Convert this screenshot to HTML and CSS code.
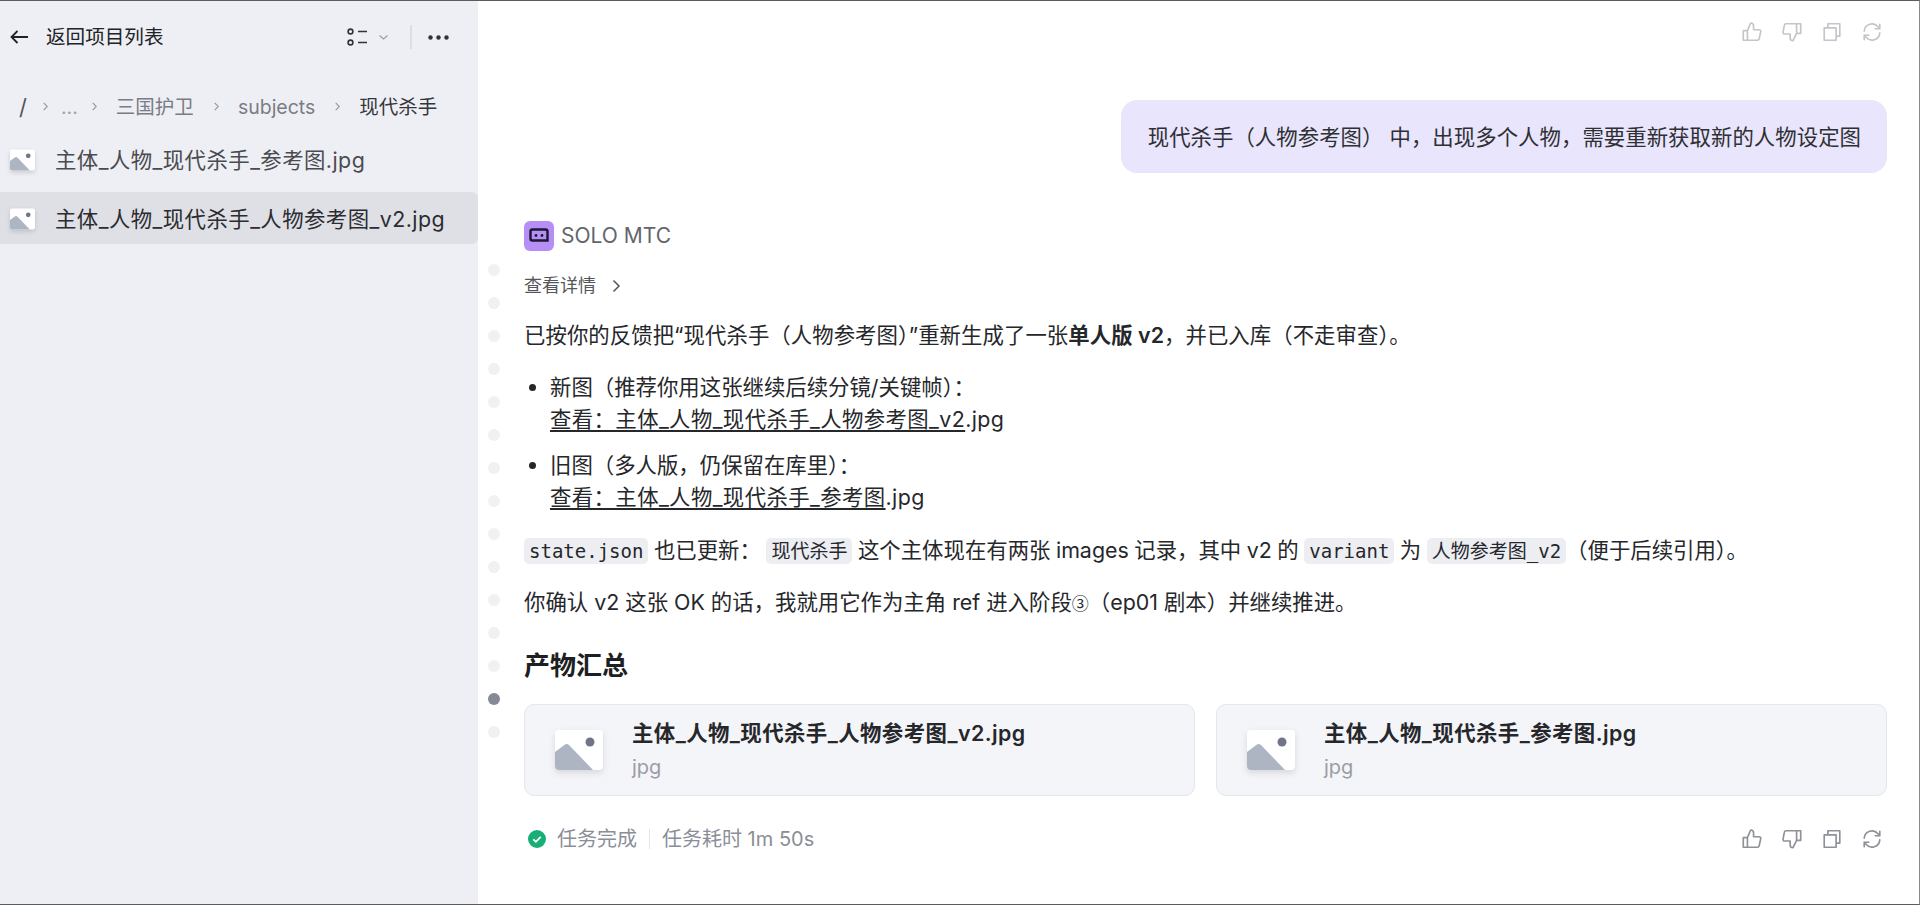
FILE: index.html
```html
<!DOCTYPE html>
<html lang="zh-CN">
<head>
  <meta charset="utf-8">
  <meta name="viewport" content="width=device-width, initial-scale=1.0">
  <title>SOLO MTC</title>
  <link rel="stylesheet" href="styles.css">
</head>
<body>
  <svg class="defs" width="0" height="0">
    <symbol id="pic" viewBox="0 0 48 40">
      <rect width="48" height="40" rx="4" fill="#fff"/>
      <path d="M0 22 L10 14.500 Q12 13.500 14 15 L38 40 H4 Q0 40 0 36 Z" fill="#adb4c2"/>
      <circle cx="35" cy="12" r="4.500" fill="#6f768a"/>
    </symbol>
    <symbol id="up" viewBox="0 0 24 24">
      <path d="M2.500 10.500h4.500v10.500H2.500z M7 10.500l3.600-8.300c1.900 0 3.100 1.200 3.100 3v4.300h6a1.800 1.800 0 0 1 1.800 2.200l-1.700 7.800a1.800 1.800 0 0 1-1.800 1.500H7" fill="none" stroke="currentColor" stroke-width="1.800" stroke-linejoin="round"/>
    </symbol>
    <symbol id="down" viewBox="0 0 24 24">
      <path d="M21.500 3H17v10.500h4.500z M17 3H5.500a1.800 1.800 0 0 0-1.800 1.500L2.200 12a1.800 1.800 0 0 0 1.800 2.200h6v4.300c0 1.800 1.200 3 3.100 3l3.900-8" fill="none" stroke="currentColor" stroke-width="1.800" stroke-linejoin="round"/>
    </symbol>
    <symbol id="copy" viewBox="0 0 24 24">
      <path d="M3.500 7.500h13v13.500h-13z M7.500 7.500V3h13v13.500h-4" fill="none" stroke="currentColor" stroke-width="1.800" stroke-linejoin="round"/>
    </symbol>
    <symbol id="redo" viewBox="0 0 24 24">
      <path d="M3.500 11a8.500 8.500 0 0 1 15-4.800L20.500 8.500 M20.500 3.500v5h-5 M20.500 13a8.500 8.500 0 0 1-15 4.800L3.500 15.500 M3.500 20.500v-5h5" fill="none" stroke="currentColor" stroke-width="1.800" stroke-linejoin="round" stroke-linecap="round"/>
    </symbol>
    <symbol id="crumb-arrow" viewBox="0 0 5 9">
      <path d="M.7.800L4.300 4.500.7 8.200" fill="none" stroke="#93959d" stroke-width="1.100"/>
    </symbol>
  </svg>

  <div class="window">
    <aside class="sidebar">
      <div class="side-head">
        <svg class="back" width="18" height="14" viewBox="0 0 18 14"><path d="M18 7H1.500 M7.500 1L1.500 7l6 6" fill="none" stroke="#222" stroke-width="1.800"/></svg>
        <span class="side-title">返回项目列表</span>
        <div class="side-tools">
          <svg width="20" height="18" viewBox="0 0 20 18"><circle cx="3.500" cy="3.500" r="2.400" fill="none" stroke="#333" stroke-width="1.600"/><circle cx="3.500" cy="14.500" r="2.400" fill="none" stroke="#333" stroke-width="1.600"/><path d="M11 3.500h9 M11 14.500h9" stroke="#333" stroke-width="1.600"/></svg>
          <svg class="chev" width="9" height="5" viewBox="0 0 9 5"><path d="M.5.500l4 3.500 4-3.500" fill="none" stroke="#9a9da6" stroke-width="1.200"/></svg>
          <span class="tool-sep"></span>
          <svg width="21" height="5" viewBox="0 0 21 5"><circle cx="2.500" cy="2.500" r="2.200" fill="#333"/><circle cx="10.500" cy="2.500" r="2.200" fill="#333"/><circle cx="18.500" cy="2.500" r="2.200" fill="#333"/></svg>
        </div>
      </div>

      <nav class="crumbs">
        <span class="crumb-root">/</span>
        <svg class="crumb-sep"><use href="#crumb-arrow"/></svg>
        <span class="crumb-dots">...</span>
        <svg class="crumb-sep"><use href="#crumb-arrow"/></svg>
        <span>三国护卫</span>
        <svg class="crumb-sep"><use href="#crumb-arrow"/></svg>
        <span>subjects</span>
        <svg class="crumb-sep"><use href="#crumb-arrow"/></svg>
        <span class="crumb-now">现代杀手</span>
      </nav>

      <div class="file">
        <svg class="file-icon"><use href="#pic"/></svg>
        <span>主体_人物_现代杀手_参考图.jpg</span>
      </div>
      <div class="file selected">
        <svg class="file-icon"><use href="#pic"/></svg>
        <span>主体_人物_现代杀手_人物参考图_v2.jpg</span>
      </div>
    </aside>

    <main class="main">
      <div class="rail">
        <i></i><i></i><i></i><i></i><i></i><i></i><i></i><i></i><i></i><i></i><i></i><i></i><i></i><i class="on"></i><i></i>
      </div>

      <div class="chat">
        <div class="actions faint">
          <svg><use href="#up"/></svg>
          <svg><use href="#down"/></svg>
          <svg><use href="#copy"/></svg>
          <svg><use href="#redo"/></svg>
        </div>

        <div class="bubble">现代杀手（人物参考图） 中，出现多个人物，需要重新获取新的人物设定图</div>

        <div class="agent">
          <svg class="logo" width="30" height="30" viewBox="0 0 30 30">
            <rect width="30" height="30" rx="6" fill="#b78ef6"/>
            <path d="M6.500 10.500a2 2 0 0 1 2-2h13a2 2 0 0 1 2 2v9H8.500a2 2 0 0 1-2-2z" fill="#b78ef6" stroke="#1c1830" stroke-width="2.400"/>
            <circle cx="12" cy="14.500" r="1.400" fill="#1c1830"/>
            <circle cx="18" cy="14.500" r="1.400" fill="#1c1830"/>
          </svg>
          <span>SOLO MTC</span>
        </div>

        <div class="details">
          <span>查看详情</span>
          <svg width="9" height="14" viewBox="0 0 9 14"><path d="M1.500 1.500L7 7l-5.500 5.500" fill="none" stroke="#555" stroke-width="1.500"/></svg>
        </div>

        <p class="p-first">已按你的反馈把“现代杀手（人物参考图）”重新生成了一张<b>单人版 v2</b>，并已入库（不走审查）。</p>

        <ul class="notes">
          <li>新图（推荐你用这张继续后续分镜/关键帧）：<br><a>查看：主体_人物_现代杀手_人物参考图_v2</a><span class="ext">.jpg</span></li>
          <li>旧图（多人版，仍保留在库里）：<br><a>查看：主体_人物_现代杀手_参考图</a><span class="ext">.jpg</span></li>
        </ul>

        <p class="p-state"><code>state.json</code> 也已更新： <code>现代杀手</code> 这个主体现在有两张 images 记录，其中 v2 的 <code>variant</code> 为 <code>人物参考图_v2</code>（便于后续引用）。</p>
        <p class="p-confirm">你确认 v2 这张 OK 的话，我就用它作为主角 ref 进入阶段<span class="circled">③</span>（ep01 剧本）并继续推进。</p>

        <h2>产物汇总</h2>

        <div class="cards">
          <div class="card">
            <svg class="card-icon"><use href="#pic"/></svg>
            <div>
              <div class="card-name">主体_人物_现代杀手_人物参考图_v2.jpg</div>
              <div class="card-type">jpg</div>
            </div>
          </div>
          <div class="card">
            <svg class="card-icon"><use href="#pic"/></svg>
            <div>
              <div class="card-name">主体_人物_现代杀手_参考图.jpg</div>
              <div class="card-type">jpg</div>
            </div>
          </div>
        </div>

        <div class="foot">
          <svg width="18" height="18" viewBox="0 0 18 18"><circle cx="9" cy="9" r="9" fill="#1aae77"/><path d="M5.300 9.300l2.600 2.500 4.800-5" fill="none" stroke="#fff" stroke-width="1.800"/></svg>
          <span class="foot-done">任务完成</span>
          <span class="foot-sep"></span>
          <span>任务耗时 1m 50s</span>
          <div class="actions">
            <svg><use href="#up"/></svg>
            <svg><use href="#down"/></svg>
            <svg><use href="#copy"/></svg>
            <svg><use href="#redo"/></svg>
          </div>
        </div>
      </div>
    </main>
  </div>
</body>
</html>
```

FILE: styles.css
```css
html, body {
  margin: 0;
  padding: 0;
  height: 100%;
  overflow: hidden;
}

body {
  font-family: Inter, "Noto Sans CJK SC", sans-serif;
  font-size: 21.4px;
  line-height: 32px;
  color: #26272b;
  background: #fff;
}

.defs {
  display: block;
  height: 0;
}

.window {
  display: flex;
  height: 905px;
  box-sizing: border-box;
  border-top: 1px solid #5c5c5c;
  border-bottom: 1px solid #5c5c5c;
  border-right: 1px solid #8a8a8a;
}

/* left column */
.sidebar {
  width: 478px;
  flex-shrink: 0;
  background-color: #eeeff4;
}

.side-head {
  display: flex;
  align-items: center;
  height: 72px;
  padding: 0 29px 0 10px;
}

.back {
  flex-shrink: 0;
}

.side-title {
  margin-left: 18px;
  font-size: 19.6px;
  font-weight: 400;
  color: #222327;
}

.side-tools {
  display: flex;
  align-items: center;
  margin-left: auto;
}

.chev {
  margin-left: 12px;
}

.tool-sep {
  width: 2px;
  height: 24px;
  margin: 0 16px 0 22px;
  background-color: #dcdee5;
}

.crumbs {
  display: flex;
  align-items: center;
  height: 61px;
  margin-top: 3px;
  padding-left: 19px;
  font-size: 19.5px;
  color: #7a7c85;
}

.crumb-sep {
  width: 5px;
  height: 9px;
  flex-shrink: 0;
}

.crumb-root {
  width: 24px;
  font-size: 22px;
  color: #555;
}

.crumb-sep + span {
  margin-left: 19px;
  margin-right: 20px;
}

.crumbs .crumb-dots {
  margin: 0 14px 0 13px;
  color: #a0a2aa;
}

.crumb-now {
  color: #35363a;
}

.file {
  display: flex;
  align-items: center;
  height: 46px;
  padding-left: 10px;
  font-size: 21.4px;
  letter-spacing: 0.45px;
  color: #4a4b50;
}

.file.selected {
  box-sizing: border-box;
  height: 52px;
  margin-top: 9px;
  padding-top: 2px;
  color: #2b2c30;
  background-color: #dfe0e5;
  border-radius: 0 6px 6px 0;
}

.file-icon {
  width: 25px;
  height: 22px;
  margin-right: 20px;
  flex-shrink: 0;
  filter: drop-shadow(0 2px 2px rgba(60, 70, 90, 0.2));
}

/* main column */
.main {
  display: flex;
  flex: 1;
  min-width: 0;
}

.rail {
  display: flex;
  flex-direction: column;
  gap: 21px;
  width: 46px;
  flex-shrink: 0;
  box-sizing: border-box;
  padding: 263px 0 0 10px;
}

.rail i {
  display: block;
  width: 12px;
  height: 12px;
  border-radius: 50%;
  background-color: #f0f1f3;
}

.rail i.on {
  background-color: #858a96;
}

.chat {
  flex: 1;
  min-width: 0;
  padding-right: 32px;
}

.actions {
  display: flex;
  align-items: center;
  gap: 18px;
  padding-right: 4px;
  color: #8d9199;
}

.actions svg {
  width: 22px;
  height: 22px;
}

.actions.faint {
  justify-content: flex-end;
  height: 62px;
  color: #c3c5ca;
}

.bubble {
  width: fit-content;
  margin: 37px 0 0 auto;
  box-sizing: border-box;
  height: 73px;
  padding: 0 26px 0 27px;
  line-height: 74px;
  letter-spacing: 0.04px;
  color: #2f3034;
  background-color: #e8e5fc;
  border-radius: 16px;
}

.agent {
  display: flex;
  align-items: center;
  gap: 7px;
  height: 30px;
  margin-top: 48px;
  font-size: 21px;
  color: #63656c;
}

.details {
  display: flex;
  align-items: center;
  gap: 16px;
  height: 28px;
  margin-top: 21px;
  font-size: 18px;
  color: #55575d;
}

p {
  margin: 0;
}

b {
  font-weight: 600;
}

.p-first {
  margin-top: 19px;
  letter-spacing: 0.05px;
}

.notes {
  margin: 20px 0 0;
  padding: 0 0 0 26px;
}

.notes li + li {
  margin-top: 14px;
}

.notes a {
  letter-spacing: 0.4px;
  text-decoration: underline;
  text-underline-offset: 3px;
}

.ext {
  letter-spacing: 0.4px;
}

.p-state {
  margin-top: 21px;
  word-spacing: -0.5px;
}

.p-confirm {
  margin-top: 20px;
}

.circled {
  font-family: "Noto Sans CJK SC", sans-serif;
  font-size: 17px;
  line-height: 1;
}

code {
  padding: 2px 5px;
  font-family: "DejaVu Sans Mono", "Noto Sans CJK SC", monospace;
  font-size: 19px;
  line-height: 1;
  background-color: #eceef2;
  border-radius: 5px;
}

h2 {
  margin: 30px 0 0;
  font-size: 26px;
  line-height: 36px;
  font-weight: 600;
  color: #1e1f22;
}

.cards {
  display: flex;
  gap: 21px;
  margin-top: 20px;
}

.card {
  display: flex;
  align-items: center;
  flex: 1;
  box-sizing: border-box;
  height: 92px;
  padding-left: 30px;
  background-color: #f4f5f8;
  border: 1px solid #e3e6ec;
  border-radius: 10px;
}

.card-icon {
  width: 48px;
  height: 40px;
  margin-right: 29px;
  flex-shrink: 0;
  filter: drop-shadow(0 3px 3px rgba(60, 70, 90, 0.16));
}

.card-name {
  font-size: 21.4px;
  font-weight: 600;
  letter-spacing: 0.45px;
  line-height: 32px;
  color: #26272b;
}

.card-type {
  margin-top: 2px;
  font-size: 20px;
  line-height: 32px;
  color: #9a9da5;
}

.foot {
  display: flex;
  align-items: center;
  height: 30px;
  margin-top: 28px;
  padding-left: 4px;
  font-size: 20px;
  color: #8a8e98;
}

.foot-done {
  margin-left: 11px;
}

.foot-sep {
  width: 1px;
  height: 20px;
  margin: 0 12px;
  background-color: #e3e5ea;
}

.foot .actions {
  margin-left: auto;
}
```
